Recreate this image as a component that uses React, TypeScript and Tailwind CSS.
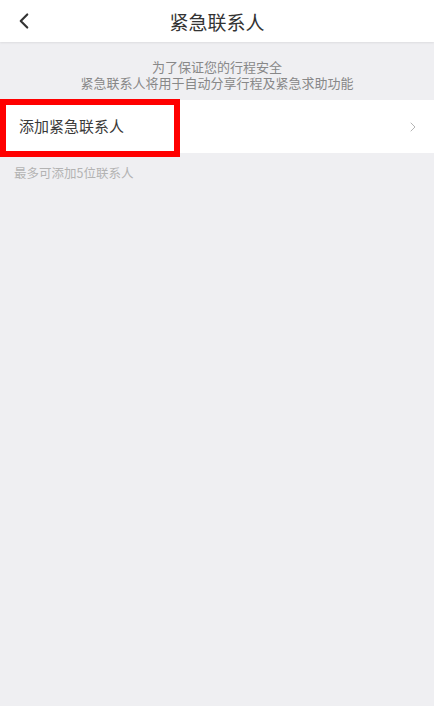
import { ChevronLeft, ChevronRight } from 'lucide-react';

export default function App() {
  return (
    <div
      className="flex min-h-[706px] w-full flex-col bg-[#efeff2]"
      style={{ fontFamily: '"Noto Sans CJK SC", "Noto Sans", sans-serif' }}
    >
      {/* 顶部导航 */}
      <header className="relative flex h-[42px] items-center justify-center bg-white shadow-[0_1px_2px_rgba(0,0,0,0.08)]">
        <button className="absolute left-[11px] top-[8px] text-[#333]">
          <ChevronLeft size={26} strokeWidth={2} />
        </button>
        <h1 className="text-[19px] leading-none text-[#333]">紧急联系人</h1>
      </header>

      {/* 说明 */}
      <div className="flex flex-col items-center pt-[17px] pb-[9px] text-[13px] leading-[16px] text-[#888]">
        <p>为了保证您的行程安全</p>
        <p>紧急联系人将用于自动分享行程及紧急求助功能</p>
      </div>

      {/* 添加联系人 */}
      <div className="relative flex h-[53px] items-center justify-between bg-white pl-[19px] pr-[13px]">
        <span className="text-[15px] text-[#3a3a3a]">添加紧急联系人</span>
        <ChevronRight size={16} strokeWidth={1.5} className="text-[#b5b5b5]" />
        <div className="pointer-events-none absolute left-0 top-[-1px] h-[58px] w-[180px] border-[6px] border-[#ff0000]" />
      </div>

      <p className="pl-[14px] pt-[11px] text-[12.5px] text-[#b3b3b3]">最多可添加5位联系人</p>
    </div>
  );
}
